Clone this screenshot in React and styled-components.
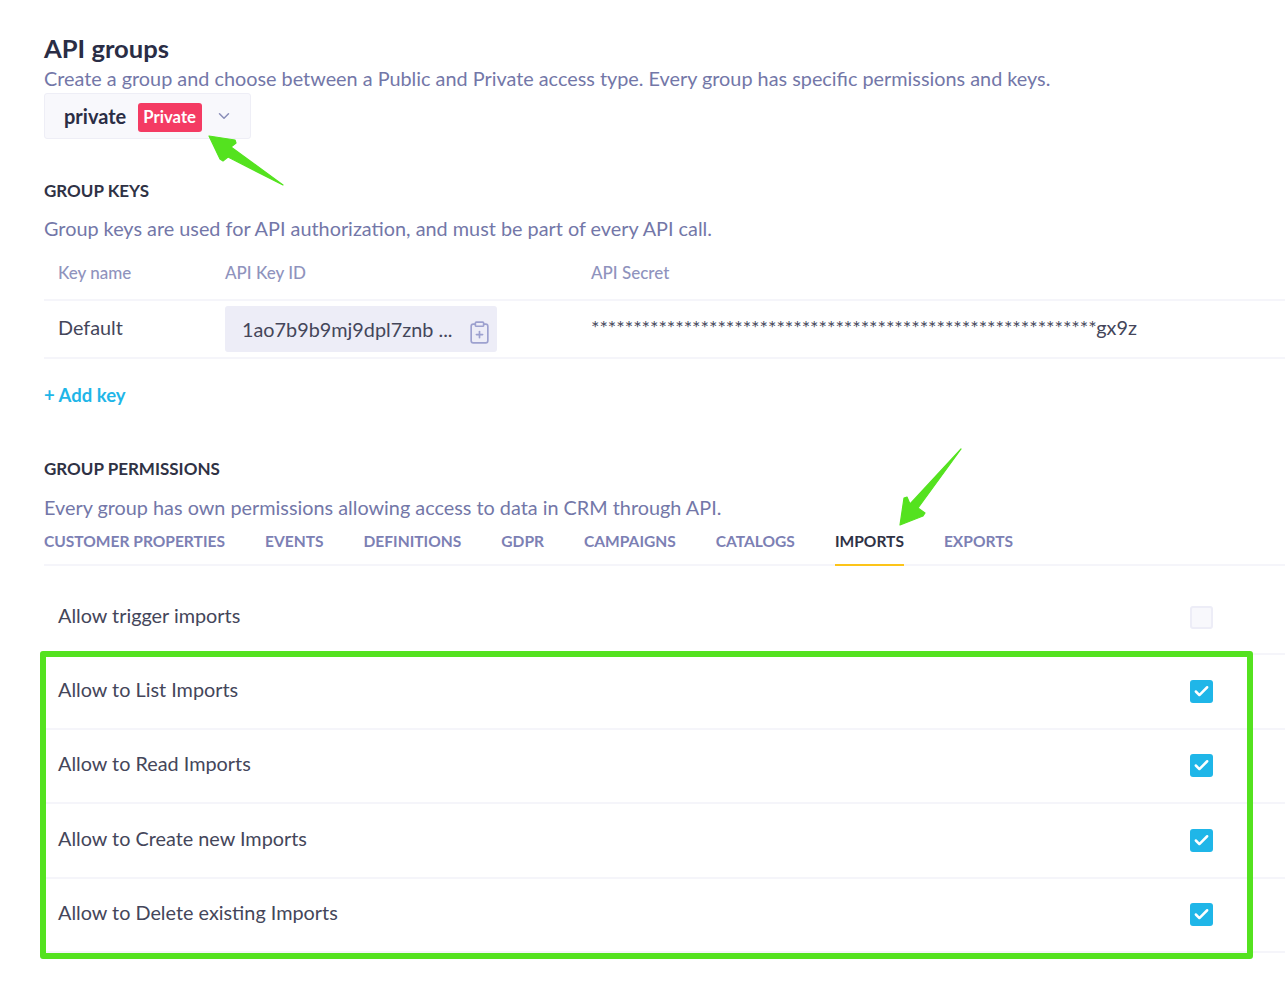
import React from "react";
import styled, { createGlobalStyle } from "styled-components";
import { ChevronDown, ClipboardPlus, Check } from "lucide-react";

const GlobalStyle = createGlobalStyle`
  html, body {
    margin: 0;
    padding: 0;
    background: #fff;
    font-family: Lato, "Liberation Sans", sans-serif;
  }
`;

const Page = styled.div`
  position: relative;
  width: 1285px;
  height: 996px;
  overflow: hidden;
  box-sizing: border-box;
  padding: 32px 0 0 44px;
`;

const Title = styled.h1`
  margin: 0;
  font-size: 25.6px;
  line-height: 32px;
  font-weight: 700;
  color: #2a2d45;
`;

const Lead = styled.p`
  margin: ${(p) => p.$top || 0}px 0 0;
  font-size: 19.84px;
  line-height: 28px;
  color: #7377a8;
  white-space: nowrap;
`;

const GroupSelect = styled.div`
  display: inline-flex;
  align-items: center;
  box-sizing: border-box;
  width: 207px;
  height: 46px;
  margin-top: 1px;
  padding-left: 19px;
  background: #f8f8fc;
  border: 1px solid #eeeef6;
  border-radius: 3px;
  color: #2a2d45;
  font-size: 20px;
  font-weight: 700;

  svg {
    margin-left: 13px;
    color: #8a8eb8;
  }
`;

const Badge = styled.span`
  margin: 2px 0 0 12px;
  padding: 0 6px 0 5px;
  height: 29px;
  line-height: 28px;
  background: #f43b63;
  border-radius: 3px;
  color: #fff;
  font-size: 16.7px;
  font-weight: 700;
`;

const SectionLabel = styled.h2`
  margin: ${(p) => p.$top}px 0 0;
  font-size: 17px;
  line-height: 22px;
  font-weight: 700;
  color: #2f3245;
`;

const KeyTable = styled.div`
  margin-top: 3px;
`;

const KeyRow = styled.div`
  display: grid;
  grid-template-columns: 167px 366px 1fr;
  align-items: center;
  padding-left: 14px;
  height: ${(p) => p.$height}px;
  border-bottom: 2px solid #f5f5fa;
  box-sizing: border-box;
`;

const HeadCell = styled.div`
  font-size: 17px;
  font-weight: 500;
  color: #8f93bd;
`;

const Cell = styled.div`
  padding-bottom: 4px;
  font-size: 19.84px;
  color: #44465a;
  white-space: nowrap;
`;

const KeyBox = styled.div`
  display: flex;
  align-items: center;
  justify-content: space-between;
  box-sizing: border-box;
  width: 272px;
  height: 46px;
  padding: 0 5px 0 17px;
  background: #ededf7;
  border-radius: 3px;
  font-size: 19.84px;
  color: #44465a;

  svg {
    color: #9da1cf;
    margin-top: 6px;
  }
`;

const AddKey = styled.a`
  display: block;
  margin-top: 22px;
  font-size: 18.5px;
  line-height: 28px;
  font-weight: 700;
  color: #1fb6e8;
`;

const Tabs = styled.div`
  display: flex;
  gap: 40px;
  height: 42px;
  margin-top: 3px;
  border-bottom: 2px solid #f5f5fa;
  box-sizing: border-box;
`;

const Tab = styled.div`
  height: 42px;
  box-sizing: border-box;
  padding-top: 6px;
  font-size: 15.55px;
  line-height: 22px;
  font-weight: 700;
  color: ${(p) => (p.$active ? "#2f3245" : "#7c80b4")};
  border-bottom: 2px solid ${(p) => (p.$active ? "#fcc419" : "transparent")};
`;

const PermList = styled.div`
  margin-top: 15px;
`;

const PermRow = styled.div`
  display: flex;
  align-items: center;
  justify-content: space-between;
  box-sizing: border-box;
  height: 74.4px;
  padding: 0 72px 0 14px;
  border-bottom: 2px solid #f5f5fa;
  font-size: 19.84px;
  color: #44465a;
`;

const PermLabel = styled.span`
  padding-bottom: 5px;
`;

const CheckBox = styled.span`
  display: flex;
  align-items: center;
  justify-content: center;
  width: 23px;
  height: 23px;
  box-sizing: border-box;
  border-radius: 3px;
  color: #fff;
  background: ${(p) => (p.$checked ? "#1fb6e8" : "#f8f8fc")};
  border: ${(p) => (p.$checked ? "none" : "2px solid #ededf7")};
`;

const Highlight = styled.div`
  position: absolute;
  left: 40px;
  top: 651px;
  width: 1213px;
  height: 308px;
  box-sizing: border-box;
  border: 6px solid #54e21f;
  border-radius: 3px;
`;

const Arrow = styled.svg`
  position: absolute;
  left: 0;
  top: 0;
  pointer-events: none;

  path {
    fill: #54e21f;
    stroke: #54e21f;
    stroke-width: 1.2;
    stroke-linejoin: round;
  }
`;

const tabs = [
  "CUSTOMER PROPERTIES",
  "EVENTS",
  "DEFINITIONS",
  "GDPR",
  "CAMPAIGNS",
  "CATALOGS",
  "IMPORTS",
  "EXPORTS",
];

const perms = [
  ["Allow trigger imports", false],
  ["Allow to List Imports", true],
  ["Allow to Read Imports", true],
  ["Allow to Create new Imports", true],
  ["Allow to Delete existing Imports", true],
];

export default function App() {
  return (
    <Page>
      <GlobalStyle />
      <Title>API groups</Title>
      <Lead>
        Create a group and choose between a Public and Private access type. Every group has specific permissions and keys.
      </Lead>
      <GroupSelect>
        private
        <Badge>Private</Badge>
        <ChevronDown size={18} strokeWidth={2} />
      </GroupSelect>

      <SectionLabel $top={41}>GROUP KEYS</SectionLabel>
      <Lead $top={12}>Group keys are used for API authorization, and must be part of every API call.</Lead>
      <KeyTable>
        <KeyRow $height={56}>
          <HeadCell>Key name</HeadCell>
          <HeadCell>API Key ID</HeadCell>
          <HeadCell>API Secret</HeadCell>
        </KeyRow>
        <KeyRow $height={58}>
          <Cell>Default</Cell>
          <KeyBox>
            1ao7b9b9mj9dpl7znb ...
            <ClipboardPlus size={25} strokeWidth={1.6} />
          </KeyBox>
          <Cell>{"*".repeat(60)}gx9z</Cell>
        </KeyRow>
      </KeyTable>
      <AddKey>+ Add key</AddKey>

      <SectionLabel $top={49}>GROUP PERMISSIONS</SectionLabel>
      <Lead $top={13}>Every group has own permissions allowing access to data in CRM through API.</Lead>
      <Tabs>
        {tabs.map((t) => (
          <Tab key={t} $active={t === "IMPORTS"}>{t}</Tab>
        ))}
      </Tabs>
      <PermList>
        {perms.map(([label, checked]) => (
          <PermRow key={label}>
            <PermLabel>{label}</PermLabel>
            <CheckBox $checked={checked}>
              {checked && <Check size={17} strokeWidth={3.5} />}
            </CheckBox>
          </PermRow>
        ))}
      </PermList>

      <Highlight />
      <Arrow width="1285" height="996" viewBox="0 0 1285 996">
        <path d="M209 136 L235 140 L236 143 L231 147 L283 185 L228 157 L223 161 L220 159 Z" />
        <path d="M961 449 L918 508 L925 513 L923 516 L900 525 L904 498 L907 497 L910 504 Z" />
      </Arrow>
    </Page>
  );
}
